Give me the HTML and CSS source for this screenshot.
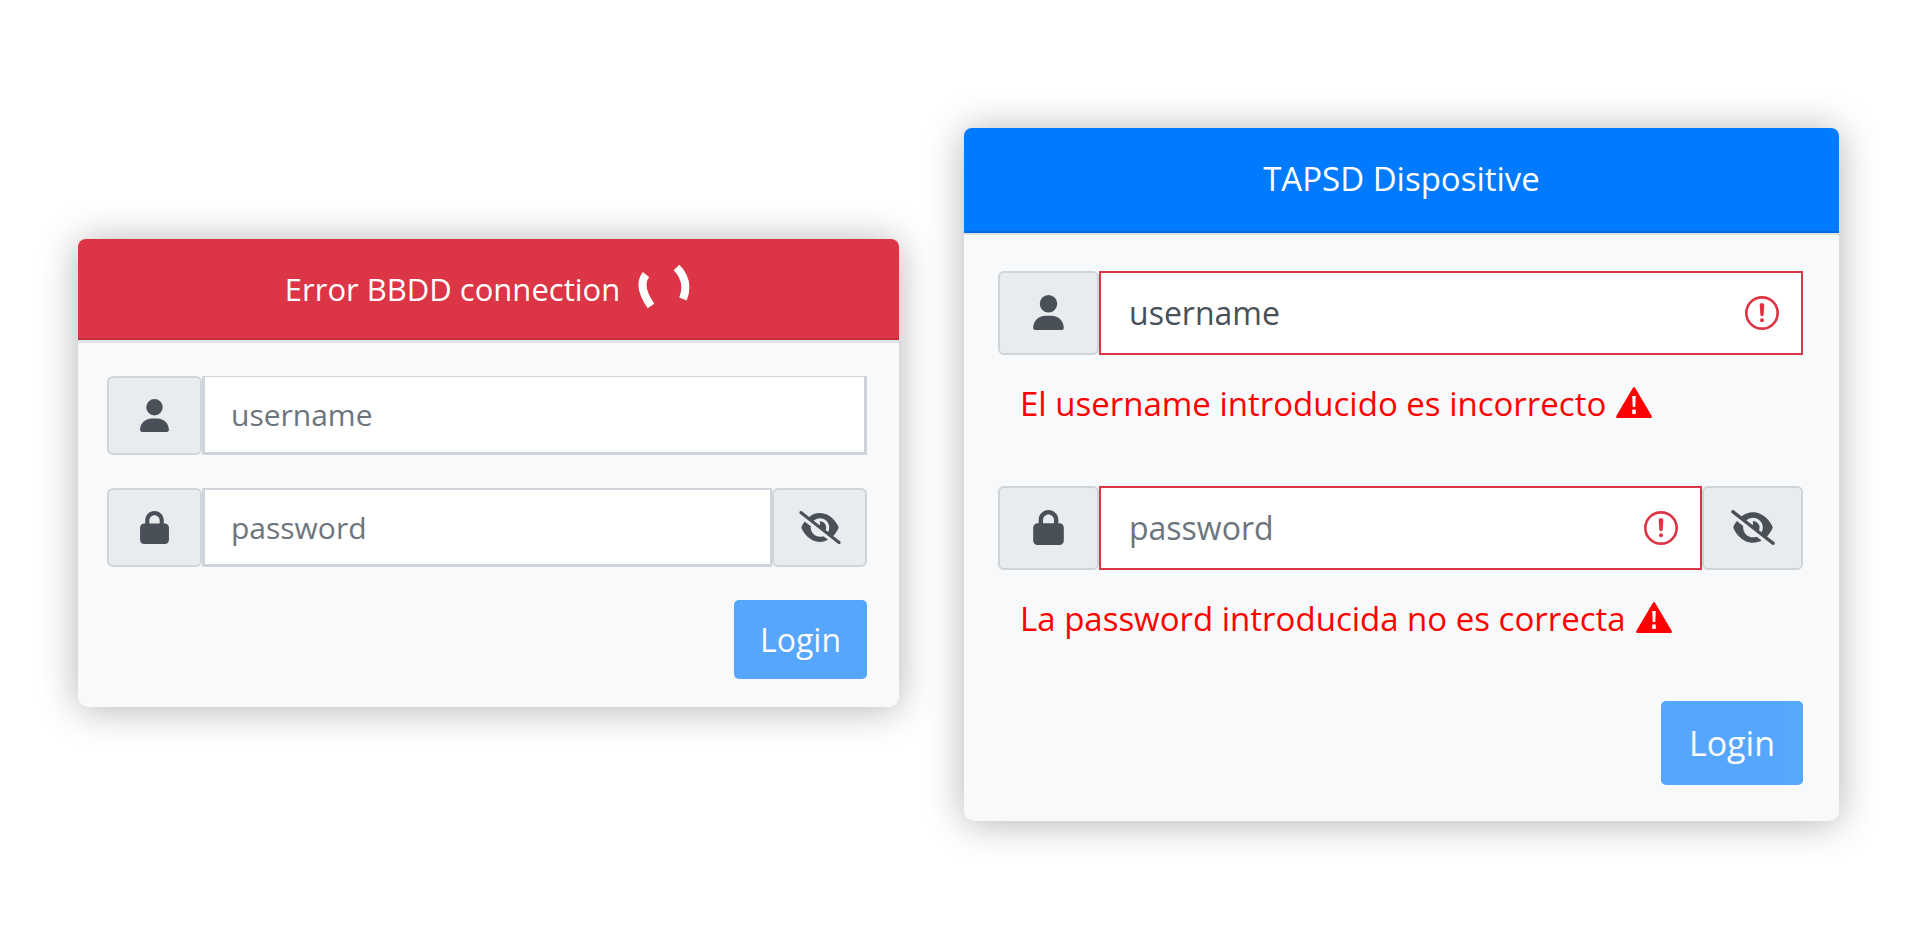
FILE: index.html
```html
<!DOCTYPE html>
<html lang="es">
<head>
<meta charset="utf-8">
<meta name="viewport" content="width=device-width, initial-scale=1">
<title>TAPSD Dispositive</title>
<link rel="stylesheet" href="styles.css">
</head>
<body>
<svg class="sprite" aria-hidden="true">
  <symbol id="user" viewBox="0 0 448 512"><path d="M224 256A128 128 0 1 0 224 0a128 128 0 1 0 0 256zm-45.700 48C79.800 304 0 383.800 0 482.300C0 498.700 13.300 512 29.700 512H418.300c16.400 0 29.700-13.300 29.700-29.700C448 383.800 368.200 304 269.700 304H178.300z"/></symbol>
  <symbol id="lock" viewBox="0 0 448 512"><path d="M144 144v48H304V144c0-44.200-35.800-80-80-80s-80 35.800-80 80zM80 192V144C80 64.500 144.500 0 224 0s144 64.500 144 144v48h16c35.300 0 64 28.700 64 64V448c0 35.300-28.700 64-64 64H64c-35.300 0-64-28.700-64-64V256c0-35.300 28.700-64 64-64H80z"/></symbol>
  <symbol id="eye-slash" viewBox="0 0 640 512"><path d="M38.800 5.100C28.400-3.100 13.300-1.200 5.100 9.200S-1.200 34.700 9.200 42.900l592 464c10.400 8.200 25.500 6.300 33.700-4.100s6.300-25.500-4.100-33.700L525.600 386.700c39.600-40.600 66.400-86.100 79.900-118.400c3.300-7.900 3.300-16.700 0-24.600c-14.900-35.700-46.200-87.700-93-131.100C465.500 68.800 400.800 32 320 32c-68.200 0-125 26.300-169.300 60.800L38.800 5.100zM223.100 149.500C248.600 126.200 282.700 112 320 112c79.500 0 144 64.500 144 144c0 24.900-6.300 48.300-17.400 68.700L408 294.500c8.400-19.300 10.600-41.400 4.800-63.300c-11.100-41.500-47.800-69.400-88.600-71.100c-5.800-.2-9.200 6.100-7.400 11.700c2.100 6.400 3.300 13.200 3.300 20.300c0 10.200-2.400 19.800-6.600 28.300l-90.300-70.800zM373 389.900c-16.400 6.500-34.300 10.100-53 10.100c-79.500 0-144-64.500-144-144c0-6.900 .5-13.600 1.400-20.200L83.100 161.500C60.300 191.200 44 220.800 34.500 243.700c-3.300 7.900-3.300 16.700 0 24.600c14.900 35.700 46.200 87.700 93 131.100C174.500 443.200 239.200 480 320 480c47.800 0 89.900-12.900 126.200-32.500L373 389.900z"/></symbol>
  <symbol id="warning" viewBox="0 0 36 31"><path fill-rule="evenodd" d="M16.800 1Q18 -.8 19.200 1L35.600 28.800Q36.500 31 34.500 31H1.500Q-.5 31 .4 28.800ZM16.200 9L16.700 20H19.300L19.800 9ZM16.200 22.500V27H19.800V22.500Z"/></symbol>
  <symbol id="invalid" viewBox="0 0 12 12"><circle cx="6" cy="6" r="4.700" fill="none" stroke="currentColor" stroke-width=".8"/><path stroke="currentColor" stroke-linejoin="round" d="M5.800 3.600h.4L6 6.500z"/><circle cx="6" cy="8.200" r=".6"/></symbol>
</svg>

<main class="page">
  <form class="card card-small">
    <header class="card-header header-danger">
      <h1 class="title">Error BBDD connection</h1>
      <svg class="spinner" viewBox="-27 -27 54 54" role="img" aria-label="Loading"><path d="M-19 -14.500Q-28 -3 -14 17M11.500 -21.500Q25 -8 18 10"/></svg>
    </header>
    <div class="card-body">
      <div class="group">
        <label class="addon" for="user-a" aria-label="username"><svg class="icon"><use href="#user"/></svg></label>
        <div class="field"><input class="input input-user" id="user-a" type="text" placeholder="username"></div>
      </div>
      <div class="group">
        <label class="addon" for="pass-a" aria-label="password"><svg class="icon"><use href="#lock"/></svg></label>
        <div class="field"><input class="input" id="pass-a" type="password" placeholder="password"></div>
        <button class="addon" type="button" aria-label="Show password"><svg class="icon icon-wide"><use href="#eye-slash"/></svg></button>
      </div>
      <button class="login" type="submit" disabled>Login</button>
    </div>
  </form>

  <form class="card card-large">
    <header class="card-header header-primary">
      <h1 class="title">TAPSD Dispositive</h1>
    </header>
    <div class="card-body">
      <div class="group">
        <label class="addon" for="user-b" aria-label="username"><svg class="icon"><use href="#user"/></svg></label>
        <div class="field">
          <input class="input invalid" id="user-b" type="text" value="username" aria-describedby="error-user">
          <svg class="invalid-icon" aria-hidden="true"><use href="#invalid"/></svg>
        </div>
      </div>
      <p class="error" id="error-user">El username introducido es incorrecto <svg class="warning" aria-hidden="true"><use href="#warning"/></svg></p>
      <div class="group">
        <label class="addon" for="pass-b" aria-label="password"><svg class="icon"><use href="#lock"/></svg></label>
        <div class="field">
          <input class="input invalid" id="pass-b" type="password" placeholder="password" aria-describedby="error-pass">
          <svg class="invalid-icon" aria-hidden="true"><use href="#invalid"/></svg>
        </div>
        <button class="addon" type="button" aria-label="Show password"><svg class="icon icon-wide"><use href="#eye-slash"/></svg></button>
      </div>
      <p class="error" id="error-pass">La password introducida no es correcta <svg class="warning" aria-hidden="true"><use href="#warning"/></svg></p>
      <button class="login" type="submit" disabled>Login</button>
    </div>
  </form>
</main>
</body>
</html>
```

FILE: styles.css
```css
* { box-sizing: border-box; }

body {
  margin: 0;
  background: #fff;
  font-family: "Open Sans", "Noto Sans", sans-serif;
}

.sprite {
  position: absolute;
  width: 0;
  height: 0;
}

.page {
  min-height: 100vh;
  padding: 24px 78px;
  display: grid;
  grid-template-columns: 821fr 875fr;
  gap: 65px;
  align-items: center;
}

.card {
  background: #f8f9fa;
  border-radius: 10px;
  box-shadow: 0 2px 38px rgba(0, 0, 0, 0.3);
}

.card-small {
  --row: 79px;
  --addon: 95px;
  --text: 30px;
  --title: 31px;
  --button: 32px;
  --icon: 33px;
  --inset: 26px;
  margin-bottom: 2px;
}

.card-large {
  --row: 84px;
  --addon: 101px;
  --text: 32px;
  --title: 33px;
  --button: 34px;
  --icon: 35px;
  --inset: 28px;
}

.card-header {
  display: flex;
  align-items: center;
  justify-content: center;
  gap: 18px;
  color: #fff;
  border-radius: 8px 8px 0 0;
}

.header-danger {
  height: 101px;
  background: #dc3545;
  border-bottom: 2px solid #c0303d;
}

.header-primary {
  height: 105px;
  background: #007bff;
  border-bottom: 2px solid #006bdf;
}

.title {
  margin: 0;
  font-size: var(--title);
  font-weight: 400;
  line-height: 44px;
}

.spinner {
  width: 54px;
  height: 54px;
  fill: none;
  stroke: #fff;
  stroke-width: 8;
}

.card-body {
  display: flex;
  flex-direction: column;
}

.card-small .card-body {
  gap: 33px;
  padding: 33px 32px 28px 29px;
  border-top: 3px solid #dee2e6;
}

.card-large .card-body {
  padding: 36px 36px 36px 34px;
  border-top: 2px solid #dee2e6;
}

.group {
  display: flex;
  height: var(--row);
}

.addon {
  flex: 0 0 var(--addon);
  display: flex;
  align-items: center;
  justify-content: center;
  padding: 0;
  color: #495057;
  background: #e9ecef;
  border: 2px solid #ced4da;
  border-radius: 6px;
}

.icon {
  width: var(--icon);
  height: var(--icon);
  fill: currentColor;
}

.icon-wide { width: 44px; }

.field {
  position: relative;
  flex: 1;
  display: flex;
}

.input {
  flex: 1;
  min-width: 0;
  padding: 0 var(--inset);
  font-family: inherit;
  font-size: var(--text);
  color: #495057;
  background: #fff;
  border: 2px solid #ced4da;
  border-width: 2px 2px 3px 3px;
  border-radius: 0;
  outline: none;
}

.input-user { border-width: 1px 3px 3px; }

.input::placeholder {
  color: #6c757d;
  opacity: 1;
}

.invalid {
  border: 2px solid #dc3545;
  padding-right: 80px;
}

.invalid-icon {
  position: absolute;
  top: calc(50% - 20px);
  right: 21px;
  width: 40px;
  height: 40px;
  color: #dc3545;
  fill: currentColor;
}

.error {
  display: flex;
  align-items: center;
  gap: 10px;
  height: 131px;
  margin: 0;
  padding: 0 22px 32px;
  font-size: 33px;
  line-height: 48px;
  color: #f00;
}

.warning {
  width: 36px;
  height: 31px;
  margin-bottom: 4px;
  fill: currentColor;
}

.login {
  align-self: flex-end;
  height: var(--row);
  padding: 0 var(--inset);
  font-family: inherit;
  font-size: var(--button);
  color: #fff;
  background: #007bff;
  border: 0;
  border-radius: 5px;
  opacity: 0.65;
}
```
